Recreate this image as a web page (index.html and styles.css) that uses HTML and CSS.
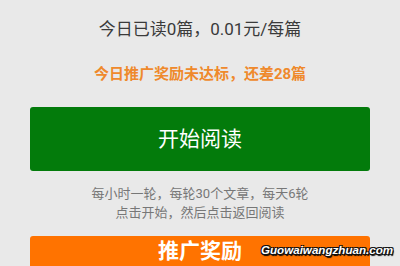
FILE: index.html
```html
<!DOCTYPE html>
<html lang="zh-CN">
<head>
<meta charset="utf-8">
<title>阅读</title>
<link rel="stylesheet" href="styles.css">
</head>
<body>
<div class="page">
  <div class="stat">今日已读0篇，0.01元/每篇</div>
  <div class="notice">今日推广奖励未达标，还差28篇</div>
  <div class="btn btn-green">开始阅读</div>
  <div class="tips">
    <div>每小时一轮，每轮30个文章，每天6轮</div>
    <div>点击开始，然后点击返回阅读</div>
  </div>
  <div class="btn btn-orange">推广奖励
    <span class="watermark">Guowaiwangzhuan.com</span>
  </div>
</div>
</body>
</html>
```
FILE: styles.css
```css
html, body {
  margin: 0;
  padding: 0;
  background: #e9e9e9;
  overflow: hidden;
}
.page {
  width: 400px;
  height: 266px;
  padding: 0 30px;
  box-sizing: border-box;
  font-family: "Roboto", "Noto Sans CJK SC", sans-serif;
  text-align: center;
  overflow: hidden;
}
.stat {
  margin-top: 17px;
  font-size: 17px;
  line-height: 24px;
  color: #3a3a3a;
}
.notice {
  margin-top: 23px;
  font-size: 15px;
  line-height: 20px;
  font-weight: bold;
  color: #ef892c;
}
.btn {
  border-radius: 3px;
  color: #fff;
  font-size: 21px;
  box-sizing: border-box;
}
.btn-green {
  margin-top: 23px;
  height: 64px;
  line-height: 64px;
  background: #037b0b;
}
.tips {
  margin-top: 13px;
  font-size: 13px;
  line-height: 19px;
  color: #777;
}
.btn-orange {
  position: relative;
  margin-top: 14px;
  height: 64px;
  line-height: 30px;
  background: #ff7300;
  font-weight: bold;
}
.watermark {
  position: absolute;
  left: 231px;
  top: 7px;
  font-family: "Liberation Sans", sans-serif;
  font-size: 11.6px;
  line-height: 14px;
  font-weight: bold;
  font-style: italic;
  color: #fff;
  text-shadow: 1px 1px 0 #111, -1px -1px 0 #111, 1px -1px 0 #111, -1px 1px 0 #111, 1px 2px 1px #000;
}
```
